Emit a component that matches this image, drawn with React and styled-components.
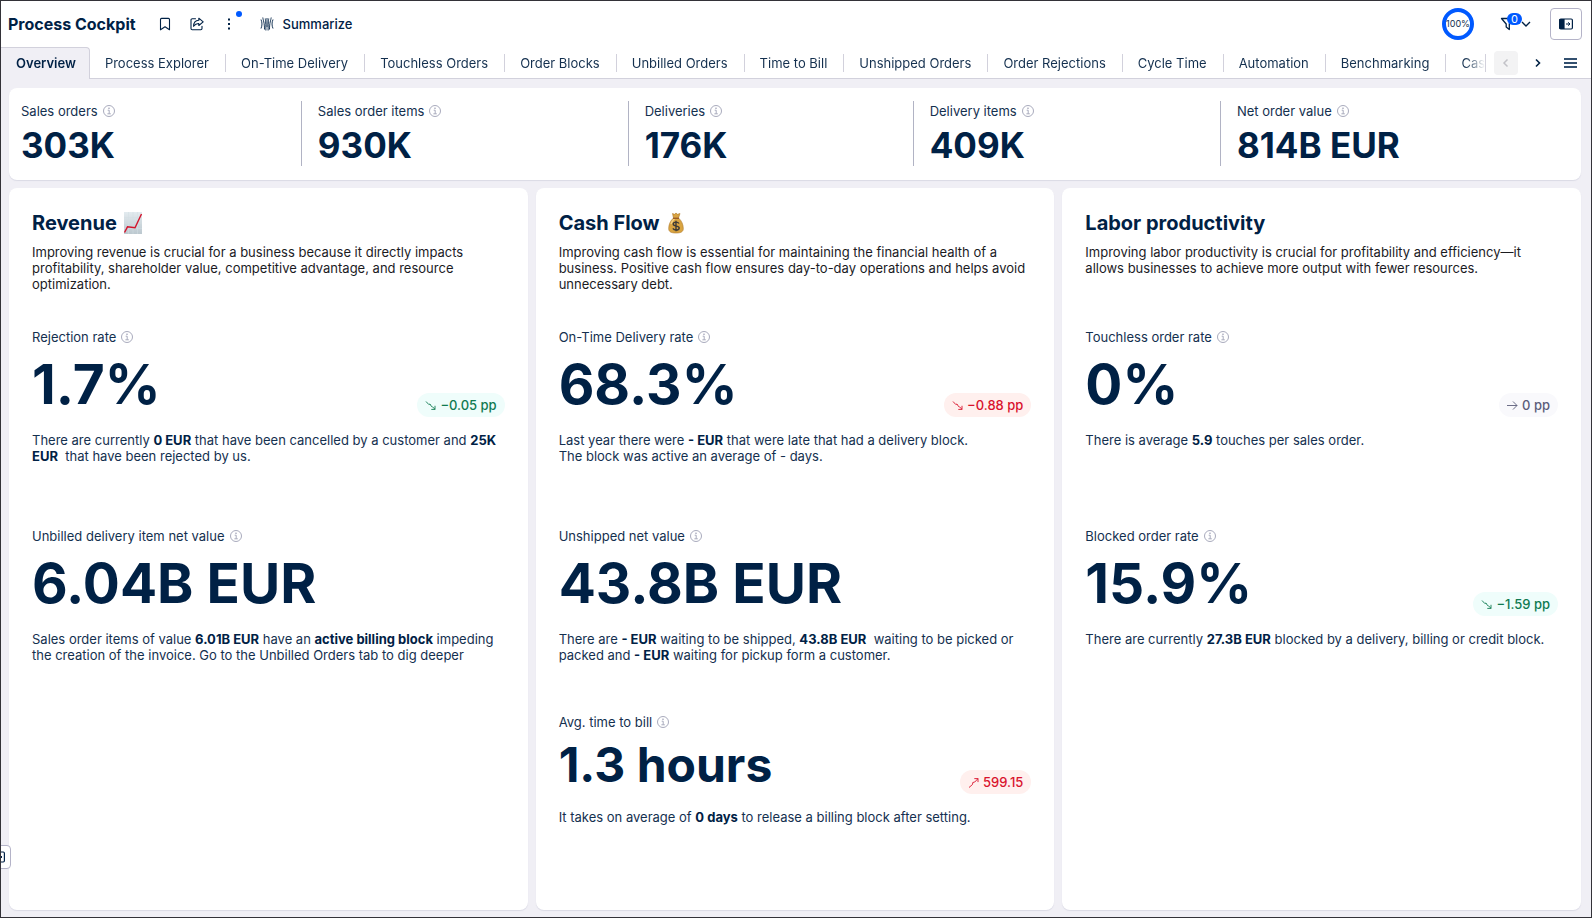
import React from "react";
import styled, { createGlobalStyle } from "styled-components";

const GlobalStyle = createGlobalStyle`
  :root {
    --ink: #002145;
    --text: #14304f;
    --muted: #a9abbd;
    --line: #d2d1dc;
    --canvas: #f0eff5;
    --blue: #0059ff;
  }

  *, *::before, *::after {
    box-sizing: border-box;
  }

  body {
    margin: 0;
    background-color: var(--canvas);
    color: var(--text);
    font-family: Inter, "Open Sans", sans-serif;
    font-size: 13px;
    line-height: 16px;
    font-optical-sizing: none;
  }

  h1, h2, h3, p, ul {
    margin: 0;
    padding: 0;
  }

  button {
    font: inherit;
    color: inherit;
    cursor: pointer;
  }
`;

const Page = styled.div`
  position: relative;
  display: flex;
  flex-direction: column;
  min-height: 100vh;
  border: 1px solid #333238;
  overflow: hidden;
`;

const Header = styled.header`
  display: flex;
  justify-content: space-between;
  align-items: center;
  height: 46px;
  padding: 0 9px 0 7px;
  background-color: #fff;
`;

const HeaderGroup = styled.div`
  display: flex;
  align-items: center;
`;

const Title = styled.h1`
  margin-right: 13px;
  color: var(--ink);
  font-size: 16px;
  line-height: 24px;
  font-weight: 700;
`;

const IconButton = styled.button`
  position: relative;
  display: flex;
  justify-content: center;
  align-items: center;
  width: 32px;
  height: 32px;
  padding: 0;
  border: ${({ $outlined }) => ($outlined ? "1px solid #b4b3c8" : "0")};
  border-radius: 4px;
  background: none;
  color: var(--ink);
`;

const NewDot = styled.span`
  position: absolute;
  top: 3px;
  right: 3px;
  width: 6px;
  height: 6px;
  border-radius: 50%;
  background-color: var(--blue);
`;

const SummarizeButton = styled.button`
  display: flex;
  align-items: center;
  gap: 8px;
  margin-left: 14px;
  padding: 0;
  border: 0;
  background: none;
  color: var(--ink);
  font-weight: 500;
`;

const Progress = styled.div`
  display: flex;
  justify-content: center;
  align-items: center;
  width: 32px;
  height: 32px;
  border: 4px solid var(--blue);
  border-radius: 50%;
  font-size: 9px;
  line-height: 12px;
`;

const FilterButton = styled.button`
  position: relative;
  display: flex;
  align-items: center;
  gap: 5px;
  margin: 0 19px 0 26px;
  padding: 0;
  border: 0;
  background: none;
  color: var(--ink);
`;

const FilterCount = styled.span`
  position: absolute;
  top: -3px;
  left: 7px;
  width: 15px;
  height: 12px;
  border-radius: 6px;
  background-color: var(--blue);
  color: #fff;
  font-size: 11px;
  line-height: 12px;
  text-align: center;
`;

const TabBar = styled.nav`
  display: flex;
  align-items: stretch;
  height: 32px;
  background-color: #fff;
  box-shadow: inset 0 -1px var(--line);
`;

const TabList = styled.ul`
  display: flex;
  flex: 1;
  min-width: 0;
  overflow: hidden;
  list-style: none;
  mask-image: linear-gradient(to left, transparent, #000 20px);
`;

const Tab = styled.li`
  display: flex;
  flex: none;
  align-items: center;

  a {
    padding: 1px 16px 1px 15px;
    color: inherit;
    text-decoration: none;
  }

  &:nth-child(n + 3) a {
    border-left: 1px solid var(--line);
  }

  &:first-child {
    border: 1px solid var(--line);
    border-width: 1px 1px 0 0;
    border-radius: 0 4px 0 0;
    background-color: var(--canvas);
    color: var(--ink);
    font-weight: 600;
  }

  &:first-child a {
    padding: 0 13px 1px 15px;
  }
`;

const TabControls = styled.div`
  display: flex;
  align-items: center;
  gap: 8px;
  padding-right: 9px;

  &::before {
    content: "";
    width: 1px;
    height: 18px;
    background-color: var(--line);
  }
`;

const TabButton = styled.button`
  display: flex;
  justify-content: center;
  align-items: center;
  width: 24px;
  height: 24px;
  padding: 0;
  border: 0;
  border-radius: 4px;
  background: none;
  color: var(--ink);

  &:disabled {
    background-color: #f3f3f4;
    color: #c2c2c8;
  }
`;

const Main = styled.main`
  display: flex;
  flex: 1;
  flex-direction: column;
  gap: 8px;
  padding: 9px 10px 7px 8px;
`;

const Card = styled.section`
  border-radius: 8px;
  background-color: #fff;
  box-shadow: 0 1px 1px #dadae5;
`;

const Summary = styled(Card)`
  display: flex;
  padding: 13px 12px 14px;
`;

const SummaryItem = styled.div`
  flex: 1 0 auto;
  height: 65px;
  padding: 2px 16px 0;

  &:first-child {
    padding-left: 0;
  }

  &:last-child {
    padding-right: 0;
  }

  & + & {
    border-left: 1px solid #b1b3c4;
  }
`;

const Label = styled.h3`
  display: flex;
  align-items: center;
  gap: 4px;
  font-size: 13px;
  line-height: 16px;
  font-weight: 400;
`;

const valueSizes = {
  small: "font-size: 35px; line-height: 52px;",
  medium: "font-size: 48px; line-height: 58px;",
  large: "font-size: 55px; line-height: 66px;",
};

const Value = styled.p`
  color: var(--ink);
  font-weight: 700;
  ${({ $size }) => valueSizes[$size]}
`;

const Columns = styled.div`
  display: grid;
  flex: 1;
  grid-template-columns: repeat(3, 1fr);
  gap: 8px;
`;

const Column = styled(Card)`
  padding: 23px;
`;

const Intro = styled.div`
  min-height: 118px;
  color: #1b1b1f;
`;

const Heading = styled.h2`
  display: flex;
  align-items: center;
  gap: 6px;
  margin-bottom: 9px;
  color: var(--ink);
  font-size: 20px;
  line-height: 24px;
  font-weight: 700;
`;

const Metric = styled.article`
  min-height: ${({ $short }) => ($short ? 186 : 199)}px;

  &:last-child {
    min-height: 0;
  }
`;

const Figure = styled.div`
  display: flex;
  justify-content: space-between;
  align-items: flex-end;
  padding-top: 6px;
  margin-bottom: 15px;
`;

const pillTones = {
  good: "background-color: #effdfb; color: #107a51;",
  bad: "background-color: #fff0ee; color: #d9132d;",
  neutral: "background-color: #f9f9fc; color: #5c5d7a;",
};

const Pill = styled.span`
  display: flex;
  align-items: center;
  gap: 4px;
  height: 24px;
  padding: 0 8px;
  border-radius: 12px;
  font-weight: 500;
  ${({ $tone }) => pillTones[$tone]}
`;

const Note = styled.p`
  color: var(--text);

  b {
    color: var(--ink);
    font-weight: 700;
  }
`;

const PanelHandle = styled.button`
  position: absolute;
  bottom: 48px;
  left: -14px;
  display: flex;
  justify-content: flex-end;
  align-items: center;
  width: 24px;
  height: 24px;
  padding: 0 4px 0 0;
  border: 1px solid #b4b3c8;
  border-radius: 4px;
  background-color: #fff;
  color: var(--ink);
`;

const Icon = ({ size = 16, children, ...rest }) => (
  <svg
    width={size}
    height={size}
    viewBox={`0 0 ${size} ${size}`}
    fill="none"
    stroke="currentColor"
    aria-hidden="true"
    {...rest}
  >
    {children}
  </svg>
);

const InfoIcon = () => (
  <Icon size={14} stroke="#a9abbd">
    <circle cx="7" cy="7" r="5.5" />
    <path d="M5.7 6.2h1.5v3.6M5.4 9.8h3.4" />
    <circle cx="7" cy="4.2" r=".4" fill="#a9abbd" />
  </Icon>
);

const BookmarkIcon = () => (
  <Icon strokeWidth="1.1" strokeLinejoin="round">
    <path d="M3.5 13.8V3.4c0-.6.4-1 1-1h7c.6 0 1 .4 1 1v10.4L8 10.8z" />
  </Icon>
);

const ShareIcon = () => (
  <Icon strokeWidth="1.1" strokeLinejoin="round" strokeLinecap="round">
    <path d="M6.5 2.8H3.2c-.7 0-1.200.5-1.200 1.200v8.500c0 .7.5 1.200 1.200 1.200h8.600c.7 0 1.200-.5 1.200-1.200v-2.300" />
    <path d="M9.800 2.200l4.400 3.700-4.400 3.600V7.500C7.600 7.400 6 8.300 4.600 10.300c0-3.500 2-5.900 5.200-6.100z" />
  </Icon>
);

const MoreIcon = () => (
  <Icon stroke="none" fill="currentColor">
    <path d="M7 2.500h2v2H7zM7 7h2v2H7zM7 11.500h2v2H7z" />
  </Icon>
);

const SummarizeIcon = () => (
  <Icon strokeWidth=".9">
    <path d="M2 3.500c1.300 3 1.300 6 0 9M14 3.500c-1.300 3-1.300 6 0 9" />
    <path d="M3.800 1.500c.4 3 1.700 5 1.700 12M12.200 1.500c-.4 3-1.700 5-1.700 12" />
    <path d="M6.300 2.500c.3 3 .6 5 .6 12M9.700 2.500c-.3 3-.6 5-.6 12M8 2v9" />
  </Icon>
);

const FilterIcon = () => (
  <Icon strokeWidth="1.3" strokeLinejoin="round">
    <path d="M1.500 2.500h12L9.300 8v5.500L6.200 11V8z" />
  </Icon>
);

const PanelIcon = () => (
  <Icon strokeWidth="1.2">
    <rect x="1.600" y="3" width="12.800" height="10" rx="1.200" />
    <path d="M2 3.500h4v9H2z" fill="currentColor" />
    <path d="M8 8h3.500M10.200 6.300L12 8l-1.800 1.700" strokeWidth="1" />
  </Icon>
);

const trendPaths = {
  down: "M1 1.500l2.800 3 1.200-.5 1.500 2.500 1 .3L10 9.300M10 5.800v3.600H6.300",
  up: "M1 10.500l3.500-3 .3-2 2-.5L10 1.600M6.300 1.600H10v3.500",
  flat: "M0 5.500h10M6 1.500L10 5.500 6 9.500",
};

const TrendIcon = ({ trend }) => (
  <Icon size={11} strokeWidth=".9">
    <path d={trendPaths[trend]} />
  </Icon>
);

const ChartEmoji = () => (
  <svg width="20" height="22" viewBox="0 0 20 22" aria-hidden="true">
    <defs>
      <linearGradient id="sheet" x1="0" y1="0" x2="0" y2="1">
        <stop offset="0" stopColor="#e3ebef" />
        <stop offset="1" stopColor="#bcc8cf" />
      </linearGradient>
    </defs>
    <path d="M1 0h18v22H1z" fill="url(#sheet)" />
    <path
      d="M1 5.500h18M1 11h18M1 16.500h18M5.500 0v22M10 0v22M14.500 0v22"
      stroke="#d3dee3"
      strokeWidth=".5"
    />
    <path
      d="M1.500 20.500L4.500 14.800l7.500 1L18.500 2"
      fill="none"
      stroke="#d3142c"
      strokeWidth="1.400"
    />
  </svg>
);

const MoneyBagEmoji = () => (
  <svg width="20" height="22" viewBox="0 0 20 22" aria-hidden="true">
    <path
      d="M6.500 1.500l2 .8L10 1l1.500 1.300 2.500-.8-1.500 4.500c3 2.500 4.800 6.500 4.800 10.500 0 3.300-2.300 4.500-7.300 4.500s-7.300-1.200-7.300-4.500C2.700 12.500 4.500 8.500 7.500 6z"
      fill="#d9a441"
      stroke="#ad7728"
      strokeWidth=".6"
    />
    <path d="M5 12c1-2.500 2-4 3.500-5.500" stroke="#f2cf80" strokeWidth="1.500" fill="none" />
    <path d="M7 6.300h6" stroke="#9c5c26" strokeWidth="1.400" />
    <path
      d="M13 11.500c-.6-1-1.600-1.400-3-1.400-1.600 0-2.800.7-2.800 2 0 3 6 1 6 3.800 0 1.400-1.300 2.100-3.100 2.100-1.500 0-2.600-.5-3.200-1.600M10 8.800v10.500"
      stroke="#3d3a37"
      strokeWidth="1.400"
      fill="none"
    />
  </svg>
);

const tabs = [
  "Overview",
  "Process Explorer",
  "On-Time Delivery",
  "Touchless Orders",
  "Order Blocks",
  "Unbilled Orders",
  "Time to Bill",
  "Unshipped Orders",
  "Order Rejections",
  "Cycle Time",
  "Automation",
  "Benchmarking",
  "Cash",
];

const totals = [
  { label: "Sales orders", value: "303K" },
  { label: "Sales order items", value: "930K" },
  { label: "Deliveries", value: "176K" },
  { label: "Delivery items", value: "409K" },
  { label: "Net order value", value: "814B EUR" },
];

const columns = [
  {
    title: "Revenue",
    emoji: <ChartEmoji />,
    intro:
      "Improving revenue is crucial for a business because it directly impacts profitability, shareholder value, competitive advantage, and resource optimization.",
    metrics: [
      {
        label: "Rejection rate",
        value: "1.7%",
        pill: { tone: "good", trend: "down", text: "−0.05 pp" },
        note: (
          <>
            There are currently <b>0 EUR</b> that have been cancelled by a
            customer and <b>25K EUR</b>&nbsp; that have been rejected by us.
          </>
        ),
      },
      {
        label: "Unbilled delivery item net value",
        value: "6.04B EUR",
        note: (
          <>
            Sales order items of value <b>6.01B EUR</b> have an{" "}
            <b>active billing block</b> impeding the creation of the invoice. Go
            to the Unbilled Orders tab to dig deeper
          </>
        ),
      },
    ],
  },
  {
    title: "Cash Flow",
    emoji: <MoneyBagEmoji />,
    intro:
      "Improving cash flow is essential for maintaining the financial health of a business. Positive cash flow ensures day-to-day operations and helps avoid unnecessary debt.",
    metrics: [
      {
        label: "On-Time Delivery rate",
        value: "68.3%",
        pill: { tone: "bad", trend: "down", text: "−0.88 pp" },
        note: (
          <>
            Last year there were <b>- EUR</b> that were late that had a delivery
            block.
            <br />
            The block was active an average of - days.
          </>
        ),
      },
      {
        label: "Unshipped net value",
        value: "43.8B EUR",
        note: (
          <>
            There are <b>- EUR</b> waiting to be shipped, <b>43.8B EUR</b>&nbsp;
            waiting to be picked or packed and <b>- EUR</b> waiting for pickup
            form a customer.
          </>
        ),
      },
      {
        label: "Avg. time to bill",
        value: "1.3 hours",
        size: "medium",
        pill: { tone: "bad", trend: "up", text: "599.15" },
        note: (
          <>
            It takes on average of <b>0 days</b> to release a billing block
            after setting.
          </>
        ),
      },
    ],
  },
  {
    title: "Labor productivity",
    intro:
      "Improving labor productivity is crucial for profitability and efficiency—it allows businesses to achieve more output with fewer resources.",
    metrics: [
      {
        label: "Touchless order rate",
        value: "0%",
        pill: { tone: "neutral", trend: "flat", text: "0 pp" },
        note: (
          <>
            There is average <b>5.9</b> touches per sales order.
          </>
        ),
      },
      {
        label: "Blocked order rate",
        value: "15.9%",
        pill: { tone: "good", trend: "down", text: "−1.59 pp" },
        note: (
          <>
            There are currently <b>27.3B EUR</b> blocked by a delivery, billing
            or credit block.
          </>
        ),
      },
    ],
  },
];

const MetricLabel = ({ children }) => (
  <Label>
    {children}
    <InfoIcon />
  </Label>
);

const MetricBlock = ({ label, value, size = "large", pill, note, short }) => (
  <Metric $short={short}>
    <MetricLabel>{label}</MetricLabel>
    <Figure>
      <Value $size={size}>{value}</Value>
      {pill && (
        <Pill $tone={pill.tone}>
          <TrendIcon trend={pill.trend} />
          {pill.text}
        </Pill>
      )}
    </Figure>
    <Note>{note}</Note>
  </Metric>
);

const App = () => {
  return (
    <>
      <GlobalStyle />
      <Page>
        <Header>
          <HeaderGroup>
            <Title>Process Cockpit</Title>
            <IconButton aria-label="Bookmark">
              <BookmarkIcon />
            </IconButton>
            <IconButton aria-label="Share">
              <ShareIcon />
            </IconButton>
            <IconButton aria-label="More options">
              <MoreIcon />
              <NewDot />
            </IconButton>
            <SummarizeButton>
              <SummarizeIcon />
              Summarize
            </SummarizeButton>
          </HeaderGroup>
          <HeaderGroup>
            <Progress>100%</Progress>
            <FilterButton aria-label="Filters">
              <FilterIcon />
              <FilterCount>0</FilterCount>
              <Icon size={10} strokeWidth="1.400">
                <path d="M1 3l4 4 4-4" />
              </Icon>
            </FilterButton>
            <IconButton $outlined aria-label="Open panel">
              <PanelIcon />
            </IconButton>
          </HeaderGroup>
        </Header>

        <TabBar>
          <TabList>
            {tabs.map((tab) => (
              <Tab key={tab}>
                <a href="#">{tab}</a>
              </Tab>
            ))}
          </TabList>
          <TabControls>
            <TabButton disabled aria-label="Previous tabs">
              <Icon size={10} strokeWidth="1.500">
                <path d="M6.500 1.500L3 5l3.500 3.500" />
              </Icon>
            </TabButton>
            <TabButton aria-label="Next tabs">
              <Icon size={10} strokeWidth="1.600">
                <path d="M3 1.500L6.500 5 3 8.500" />
              </Icon>
            </TabButton>
            <TabButton aria-label="All tabs">
              <Icon size={14} strokeWidth="2" stroke="#33506f">
                <path d="M1 3h13M1 7h13M1 11h13" />
              </Icon>
            </TabButton>
          </TabControls>
        </TabBar>

        <Main>
          <Summary>
            {totals.map(({ label, value }) => (
              <SummaryItem key={label}>
                <MetricLabel>{label}</MetricLabel>
                <Value $size="small">{value}</Value>
              </SummaryItem>
            ))}
          </Summary>

          <Columns>
            {columns.map(({ title, emoji, intro, metrics }) => (
              <Column key={title}>
                <Intro>
                  <Heading>
                    {title}
                    {emoji}
                  </Heading>
                  <p>{intro}</p>
                </Intro>
                {metrics.map((metric, index) => (
                  <MetricBlock
                    key={metric.label}
                    {...metric}
                    short={index > 0}
                  />
                ))}
              </Column>
            ))}
          </Columns>
        </Main>

        <PanelHandle aria-label="Open side panel">
          <PanelIcon />
        </PanelHandle>
      </Page>
    </>
  );
};

export default App;
